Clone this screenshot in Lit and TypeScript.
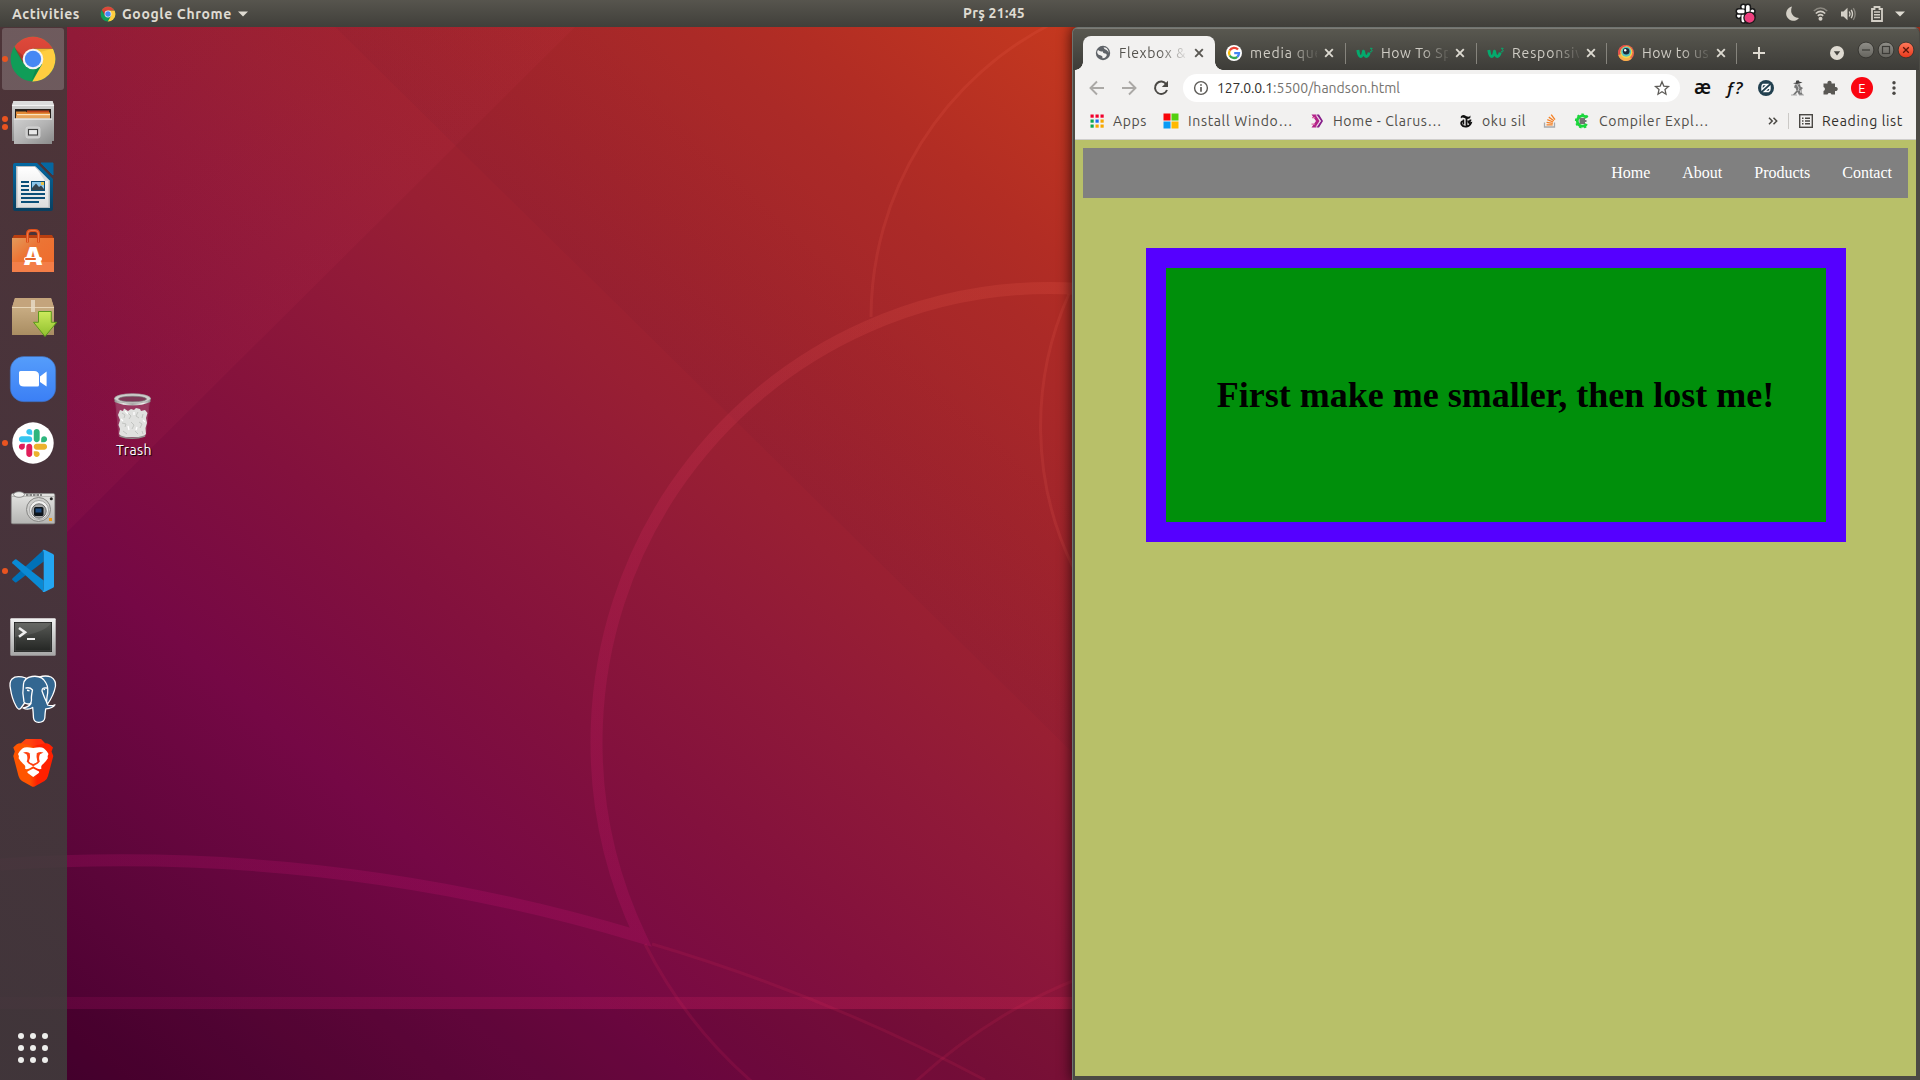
import { LitElement, html, svg, css } from "lit";
import { customElement, property } from "lit/decorators.js";

/* One line of text whose tracking is adjusted to span a given width. */
@customElement("fit-text")
class FitText extends LitElement {
  @property({ type: Number }) w = 0;
  @property() text = "";
  static styles = css`
    :host { display: block; white-space: pre; flex: none; }
    .run { display: inline-block; }
  `;
  firstUpdated() {
    const run = this.renderRoot.querySelector(".run") as HTMLElement;
    const natural = run.getBoundingClientRect().width;
    run.style.letterSpacing = (this.w - natural) / this.text.length + "px";
  }
  render() {
    return html`<span class="run">${this.text}</span>`;
  }
}

const chromeLogo = (id: string) => svg`
  <clipPath id=${"cc" + id}><circle cx="24" cy="24" r="22.4"/></clipPath>
  <linearGradient id=${"cr" + id} x1="0" y1="0" x2="0" y2="1"><stop offset="0" stop-color="#e04a3c"/><stop offset="1" stop-color="#cf3e32"/></linearGradient>
  <g clip-path=${"url(#cc" + id + ")"}>
    <rect width="48" height="48" fill="#109d58"/>
    <path d="M24 13.8H48V48H22.500L33 29.200Z" fill="#ffcd40"/>
    <path d="M4 9L0 0H48V13.800H24L15 28.500Z" fill=${"url(#cr" + id + ")"}/>
    <path d="M24 13.800H43.500L31 17Z" fill="#d9a520" opacity=".4"/>
    <path d="M5.500 13L14.500 28.500L15.500 22Z" fill="#8c2a1e" opacity=".5"/>
    <path d="M22.500 46L33 29L27 33Z" fill="#0a6b3a" opacity=".4"/>
  </g>
  <circle cx="24" cy="24" r="10.300" fill="#f4f4f4"/>
  <circle cx="24" cy="24" r="8.200" fill="#4688f4"/>`;

const slackShape = (c: string[]) => svg`
  <path fill=${c[0]} d="M25.800 77.600c0 7.100-5.800 12.900-12.900 12.900S0 84.700 0 77.600s5.800-12.900 12.900-12.900h12.900v12.900zm6.500 0c0-7.100 5.800-12.900 12.900-12.900s12.900 5.800 12.900 12.900v32.300c0 7.100-5.800 12.900-12.900 12.900s-12.900-5.800-12.900-12.900V77.600z"/>
  <path fill=${c[1]} d="M45.200 25.800c-7.100 0-12.900-5.800-12.900-12.900S38.100 0 45.200 0s12.900 5.800 12.900 12.900v12.900H45.200zm0 6.500c7.100 0 12.900 5.800 12.900 12.900s-5.800 12.900-12.900 12.900H12.900C5.800 58.100 0 52.300 0 45.200s5.800-12.900 12.900-12.900h32.300z"/>
  <path fill=${c[2]} d="M97 45.200c0-7.100 5.800-12.900 12.900-12.900s12.900 5.800 12.900 12.900-5.800 12.900-12.900 12.900H97V45.200zm-6.500 0c0 7.100-5.800 12.900-12.900 12.900s-12.900-5.800-12.900-12.900V12.900C64.700 5.800 70.500 0 77.600 0s12.900 5.800 12.900 12.900v32.300z"/>
  <path fill=${c[3]} d="M77.600 97c7.100 0 12.900 5.800 12.900 12.900s-5.800 12.900-12.900 12.900-12.900-5.800-12.900-12.900V97h12.900zm0-6.500c-7.100 0-12.900-5.800-12.900-12.900s5.800-12.900 12.900-12.900h32.300c7.100 0 12.900 5.800 12.900 12.900s-5.800 12.900-12.900 12.900H77.600z"/>`;

const filesIcon = svg`
  <linearGradient id="fa" x1="0" y1="0" x2="0" y2="1"><stop offset="0" stop-color="#d6d6d6"/><stop offset="1" stop-color="#8e8e8e"/></linearGradient>
  <linearGradient id="fb" x1="0" y1="0" x2="1" y2="1"><stop offset="0" stop-color="#cfcfcf"/><stop offset=".5" stop-color="#b4b4b4"/><stop offset="1" stop-color="#8b8b8b"/></linearGradient>
  <path d="M4.500 2H43.500L45 6.500V42H3V6.500Z" fill="url(#fa)"/>
  <path d="M4.500 2H43.500L45 6.500H3Z" fill="#dcdcdc"/><rect x="3" y="6" width="42" height="1" fill="#f2f2f2"/>
  <rect x="6" y="10" width="36" height="11" fill="#26201c"/>
  <path d="M18 11.500H40V14H18Z" fill="#c0461c"/>
  <path d="M7 12.500H17L18 13.500H41V20H7Z" fill="#e38a35"/>
  <rect x="8" y="15" width="33" height="1.400" fill="#fbe3bf"/><rect x="7" y="17" width="34" height="3" fill="#e7a55c"/>
  <rect x="5" y="19.500" width="38" height="25.500" rx=".6" fill="url(#fb)"/><rect x="5" y="19.500" width="38" height="1.200" fill="#ececec"/>
  <rect x="17" y="28" width="14" height="11" rx="2" fill="#c9c9c9" stroke="#dadada" stroke-width=".8"/>
  <rect x="19.500" y="30.500" width="9" height="5.500" fill="#e8e8e8" stroke="#3f3f3f" stroke-width="1.100"/>`;

const writerIcon = svg`
  <linearGradient id="wa" x1="0" y1="0" x2="0" y2="1"><stop offset="0" stop-color="#0369a3"/><stop offset="1" stop-color="#0a3f5f"/></linearGradient>
  <linearGradient id="wb" x1="0" y1="0" x2="0" y2="1"><stop offset="0" stop-color="#fff"/><stop offset="1" stop-color="#dedede"/></linearGradient>
  <path d="M6 0H28L44 16V46Q44 48 42 48H6Q4 48 4 46V2Q4 0 6 0Z" fill="url(#wa)"/>
  <path d="M32 0H44V12Z" fill="#0667a0" stroke="#0667a0" stroke-linejoin="round"/>
  <path d="M7 3H26L41 18V45H7Z" fill="#b9bdc0"/><path d="M8.500 4H26L39.500 18.500V44H8.500Z" fill="url(#wb)"/>
  <path d="M26 3L41 18H36Z" fill="#d6dbe0"/>
  <path d="M12 19H20M12 23H20M12 27H20M12 31H36M12 35H36M12 39H30" stroke="#0b4f78" stroke-width="2"/>
  <rect x="22.500" y="18.500" width="13" height="9" fill="#8cc6ea" stroke="#0b4f78"/><path d="M23 27V25L27 20.500L30 24L32 22.500L35 26V27Z" fill="#36444d"/><rect x="32" y="19" width="3" height="3" fill="#e5c14c"/>`;

const softwareIcon = svg`
  <linearGradient id="sa" x1="0" y1="0" x2="1" y2="1"><stop offset="0" stop-color="#e39a5b"/><stop offset=".4" stop-color="#ec7434"/><stop offset="1" stop-color="#f06a2c"/></linearGradient>
  <path d="M5 8H43L45 11.500H3Z" fill="#b93f10"/>
  <rect x="3" y="11" width="42" height="34" fill="url(#sa)"/><rect x="3" y="35" width="42" height="10" fill="#f58552" opacity=".7"/>
  <path d="M18.500 15.500V7Q18.500 3.500 22 3.500H26Q29.500 3.500 29.500 7V15.500" fill="none" stroke="#dd4f1a" stroke-width="3"/>
  <path d="M18.500 15V7Q18.500 3.500 22 3.500H26Q29.500 3.500 29.500 7V15" fill="none" stroke="#f08554" stroke-width=".8"/>
  <text x="24" y="38" text-anchor="middle" font-family="Open Sans, sans-serif" font-weight="800" font-size="25" fill="#fff">A</text>
  <rect x="15" y="30" width="18" height="4" rx="2" fill="#fff"/><rect x="16" y="31" width="11" height="2" rx="1" fill="#e8622a"/>`;

const packageIcon = svg`
  <linearGradient id="pa" x1="0" y1="0" x2="0" y2="1"><stop offset="0" stop-color="#d3b78e"/><stop offset="1" stop-color="#a98d62"/></linearGradient>
  <linearGradient id="pb" x1="0" y1="0" x2="0" y2="1"><stop offset="0" stop-color="#cdea5d"/><stop offset="1" stop-color="#8fbf2d"/></linearGradient>
  <path d="M6 7H42L45 16.500V44H3V16.500Z" fill="url(#pa)"/><path d="M6 7H42L45 16.500H3Z" fill="#c4a47c"/>
  <rect x="3" y="16" width="42" height="1" fill="#e7d5b6"/><rect x="22" y="9" width="4" height="12" fill="#e8dcc8" opacity=".8"/>
  <path d="M29.500 20.500H42.300V31.300H47.700L36 45.500L24.500 31.300H29.500Z" fill="url(#pb)" stroke="#5c9a1c"/>`;

const zoomIcon = svg`
  <linearGradient id="za" x1="0" y1="0" x2="0" y2="1"><stop offset="0" stop-color="#559dfb"/><stop offset="1" stop-color="#3b7ff5"/></linearGradient>
  <rect x="1.300" y="1.500" width="45.400" height="45.200" rx="13.500" fill="url(#za)" stroke="#3f6cb4" stroke-width=".6"/>
  <path d="M10 17.500Q10 16 11.500 16H25Q30 16 30 20.500V30Q30 31.500 28.500 31.500H15Q10 31.500 10 27ZM31 21.500L37.600 16.500V31.500L31 27Z" fill="#fff"/>`;

const slackIcon = svg`<circle cx="24" cy="24" r="20.700" fill="#fff"/><g transform="translate(9.900 9.900) scale(.2295)">${slackShape(["#e01e5a", "#36c5f0", "#2eb67d", "#ecb22e"])}</g>`;

const cameraIcon = svg`
  <linearGradient id="ca" x1="0" y1="0" x2="0" y2="1"><stop offset="0" stop-color="#e4e4e2"/><stop offset="1" stop-color="#b4b4b2"/></linearGradient>
  <rect x="2.300" y="10.500" width="43.500" height="30.300" rx="1.500" fill="url(#ca)" stroke="#8a8a88" stroke-width=".7"/>
  <path d="M3 13.500H45" stroke="#a2a2a0" stroke-width=".6"/><path d="M17 12H33" stroke="#666" stroke-width="1.600" stroke-dasharray="2.500 1"/>
  <ellipse cx="10" cy="11.500" rx="5.500" ry="2.800" fill="#ededeb" stroke="#777" stroke-width=".8"/>
  <circle cx="29.500" cy="26.500" r="12" fill="#cfcfcd" stroke="#868684"/><circle cx="30" cy="27" r="9.500" fill="#f1f1f0" stroke="#999" stroke-width=".8"/>
  <circle cx="30" cy="28" r="7.200" fill="#a6a6a6" stroke="#6f6f6f"/><rect x="25" y="24" width="9.500" height="9" rx="1.500" fill="#0d1319"/><rect x="26.500" y="25.500" width="6" height="4" fill="#1f4b80"/>
  <circle cx="42.300" cy="15.800" r="1.500" fill="#222"/><rect x="40" y="35" width="3" height="3" fill="#f09a1a"/>`;

const codeIcon = svg`
  <path d="M34.700 2.700L3.400 31.500Q2.700 32.300 3.400 33L6 35.200Q6.800 35.700 7.500 35.200L34.700 14.500Z" fill="#0071b8"/>
  <path d="M34.700 45L3.400 16.300Q2.700 15.500 3.400 14.800L6 12.600Q6.800 12.100 7.500 12.600L34.700 33.500Z" fill="#0a8ad4"/>
  <path d="M33.500 3Q34.700 2.400 36 3L44 7Q45 7.500 45 8.600V39.200Q45 40.300 44 40.800L36 44.700Q34.700 45.400 33.500 44.800Q34.700 44 34.700 42V6Q34.700 4 33.500 3Z" fill="#24a6f2"/>`;

const terminalIcon = svg`
  <linearGradient id="ta" x1="0" y1="0" x2="0" y2="1"><stop offset="0" stop-color="#f2f2f2"/><stop offset="1" stop-color="#a6a6a6"/></linearGradient>
  <linearGradient id="tb" x1="0" y1="0" x2="0" y2="1"><stop offset="0" stop-color="#575955"/><stop offset="1" stop-color="#242624"/></linearGradient>
  <rect x="1.300" y="7.200" width="45.400" height="37.500" rx="1" fill="url(#ta)"/><rect x="5" y="11" width="38" height="30" fill="#1c1e1c"/>
  <rect x="6" y="12" width="36" height="28" fill="url(#tb)" stroke="#555" stroke-width=".7"/><path d="M6 12H42Q36 22 6 26Z" fill="#fff" opacity=".09"/>
  <path d="M10 17L16 21.300L10 25.700" fill="none" stroke="#eee" stroke-width="2.600"/><rect x="18" y="27" width="8" height="2" fill="#eee"/>`;

const elephantIcon = svg`
  <g fill="#336791" stroke="#fff" stroke-width="1.300" stroke-linejoin="round" stroke-linecap="round">
    <path d="M30 2Q37 0 42 2Q47 5 46.500 11Q45 20 38 30L33 20Z"/>
    <path d="M17 3Q7 0 3 4Q0 7 1.500 14Q3 24 7 31Q9.500 36 12 33L17 26Z"/>
    <path d="M15 27Q13 18 14.500 9Q15.500 2.500 23 1.500Q33 0 37 8Q40 13 38 22Q37 27 38.500 30Q42 31.500 46 29.800Q44 33.500 36.700 33.800Q36 38 35.800 43Q35 47.500 29.500 47.300Q25 47 24.500 43Q24.200 37 23.700 32.500Q19 35.500 14 33Q19 32.500 22 28.500Q17 30 15 27Z"/>
    <path d="M17 13Q21 12 23.500 15Q22 22 22.500 25Q22.500 28 20.500 29.500" fill="none"/>
    <path d="M37.500 13Q33 12 33 16Q35 22 38 28" fill="none"/>
  </g>
  <path d="M18 15.200L20.500 15.700M34.500 14.500L36 14.200" stroke="#fff" stroke-width="1.400"/>`;

const braveIcon = svg`
  <linearGradient id="ba" x1="0" x2="1"><stop offset=".4" stop-color="#ff5500"/><stop offset=".6" stop-color="#ff2000"/></linearGradient>
  <path d="M17 0H32L36 4.300Q39.500 3.500 44 8.500L42.500 12.500L44.300 17L39 37Q38 40.500 35.500 42L26 47.300Q24.200 48.300 22.500 47.300L13 42Q10.500 40.500 9.500 37L4.300 17L5.800 12.500L4.300 8.500Q8.500 3.500 12 4.300Z" fill="url(#ba)"/>
  <path d="M17 0H32L36 4.300L24 7L12 4.300Z" fill="#ff3a1a" opacity=".6"/>
  <path d="M24.200 9Q19 8 15.500 8.500Q12 9.500 9 15Q10.500 17.500 9.500 19Q11 22 15.500 26Q16.800 27.500 16 29.500Q17.500 31.800 24.200 27.300Q31 31.800 32.500 29.500Q31.700 27.500 33 26Q37.500 22 39 19Q38 17.500 39.500 15Q36.500 9.500 33 8.500Q29.500 8 24.200 9Z" fill="#fff"/>
  <path d="M14 13.500Q19 12 21.200 14.800Q22 18 20 22.500Q21 24 24.200 25Q27.500 24 28.500 22.500Q26.500 18 27.300 14.800Q29.500 12 34.500 13.500L31 15.200Q29.300 18.500 30.800 22.500L29 24.500L24.200 27.300L19.500 24.500L17.700 22.500Q19.200 18.500 17.500 15.200Z" fill="#ff4010"/>
  <path d="M20.800 14.500H27.700Q27 18 28 22L24.200 23.700L20.500 22Q21.500 18 20.800 14.500Z" fill="#fff"/>
  <path d="M24.200 29.500L30 32.500Q30.500 33.500 29.500 34.200L24.200 38L19 34.200Q18 33.500 18.500 32.500Z" fill="#fff"/>`;

const trashIcon = svg`
  <linearGradient id="tr" x1="0" x2="1"><stop offset="0" stop-color="#8d8d8b"/><stop offset=".25" stop-color="#e6e6e4"/><stop offset=".5" stop-color="#a9a9a7"/><stop offset=".8" stop-color="#efefed"/><stop offset="1" stop-color="#888"/></linearGradient>
  <path d="M1.500 7L5 43Q18 47 31.500 43L35.500 7Z" fill="#fff" opacity=".16" stroke="#ddd" stroke-width="1"/>
  <path d="M4 22L6 17L9 18L10 15.500L14 18L17 16L20 17L22 15L26 16L27 18L31 17L33.500 20L32 25L33 30L31.500 35L32 41L29 44H8L5 41L6 36L4.500 32L6 27Z" fill="#e0e1df"/>
  <path d="M8 20L11 22L10 25M14 20L17 23L15 26M24 19L22 23L25 25M29 21L28 25M8 30L12 31L11 34M17 29L20 32L18 36M25 29L28 31L26 35M9 38L13 41M21 38L24 41M28 38L29 41" fill="none" stroke="#c2c4c1" stroke-width="1"/>
  <path d="M11 18L14 21M20 19L20 22M7 26L9 28M14 33L15 37M23 34L22 37M29 27L31 29" fill="none" stroke="#fff" stroke-width="1.300"/>
  <path d="M5.500 43Q18 47.500 31 43" fill="none" stroke="#8f8f8d" stroke-width="1.500"/>
  <path d="M.5 5V9Q9 12.500 18.500 12.500T36.500 9V5Z" fill="url(#tr)"/>
  <ellipse cx="18.500" cy="5.500" rx="18" ry="4.800" fill="#cfcfcd" stroke="#a5a5a3" stroke-width=".7"/><ellipse cx="18.500" cy="6" rx="14" ry="2.800" fill="#7d3a58" stroke="#777" stroke-width=".7"/>`;

const dock = [
  { icon: chromeLogo("dock"), dots: 1, active: true },
  { icon: filesIcon, dots: 2 },
  { icon: writerIcon, dots: 0 },
  { icon: softwareIcon, dots: 0 },
  { icon: packageIcon, dots: 0 },
  { icon: zoomIcon, dots: 0 },
  { icon: slackIcon, dots: 1 },
  { icon: cameraIcon, dots: 0 },
  { icon: codeIcon, dots: 1 },
  { icon: terminalIcon, dots: 0 },
  { icon: elephantIcon, dots: 0 },
  { icon: braveIcon, dots: 0 },
];

const globe = svg`<circle cx="8" cy="8" r="7.200" fill="#5f6368"/><path d="M3 5Q5 7 7.500 6.300Q8 8.500 10 8.500Q12.500 9 11.500 11Q10 13.500 7.500 13.200Q8 11 6 10.500Q3 10 2.200 8Q2 6 3 5ZM8.500 2.200Q9 4.500 11.500 5Q13 6 13.800 8Q13.500 4.500 11.500 3Q10 2.200 8.500 2.200Z" fill="#f2f1f0"/>`;
const google = svg`<circle cx="8" cy="8" r="8" fill="#fff"/><g fill="none" stroke-width="2.300"><path d="M12 4.600A5 5 0 0 0 3.700 5.500" stroke="#ea4335"/><path d="M3.700 5.500A5 5 0 0 0 3.700 10.500" stroke="#fbbc05"/><path d="M3.700 10.500A5 5 0 0 0 11.300 11.800" stroke="#34a853"/><path d="M11.300 11.800A5 5 0 0 0 13 8.200H8.200" stroke="#4285f4"/></g>`;
const w3 = svg`<path d="M.8 5Q1.800 11.500 3.800 11.500Q5.500 11.500 6.500 6.200Q7.500 11.500 9.300 11.500Q11.200 11.500 12.200 7.500" fill="none" stroke="#04aa6d" stroke-width="3" stroke-linejoin="round"/><path d="M13 3.300H15.200L14.100 4.800Q15.500 5 15.200 6.200Q14.600 7.200 13 6.700" fill="none" stroke="#04aa6d" stroke-width="1"/>`;
const eye = svg`<circle cx="8" cy="8" r="8" fill="#ef6b4a"/><path d="M8 0A8 8 0 0 0 .3 10L8 8Z" fill="#e34c4c"/><path d="M.3 10A8 8 0 0 0 13.500 13.800L8 8Z" fill="#f7b04c"/><circle cx="8.300" cy="7.300" r="6" fill="#f5d547"/><circle cx="8.200" cy="6.800" r="5" fill="#58c3c0"/><circle cx="8.200" cy="6.300" r="3.300" fill="#1b2a3a"/><circle cx="7.200" cy="5.300" r="1.200" fill="#fff"/>`;

const tabs = [
  { icon: globe, title: "Flexbox &", w: 67, active: true },
  { icon: google, title: "media que", w: 73 },
  { icon: w3, title: "How To Sp", w: 71 },
  { icon: w3, title: "Responsiv", w: 71 },
  { icon: eye, title: "How to us", w: 67 },
];

const bookmarks = [
  { cls: "b-apps", w: 34, label: "Apps", icon: svg`${[0, 1, 2].map((r) => [0, 1, 2].map((c) => svg`<rect x=${1.5 + c * 5} y=${1.5 + r * 5} width="3.200" height="3.200" fill=${[["#f2002c", "#f2002c", "#f2002c"], ["#0ca650", "#1a6ef0", "#f7a800"], ["#0ca650", "#f7a800", "#f7a800"]][r][c]}/>`))}` },
  { cls: "b-win", w: 105, label: "Install Windo…", icon: svg`<path d="M.5 .5h7v7h-7z" fill="#f80508"/><path d="M8.500 .5h7v7h-7z" fill="#52d010"/><path d="M.5 8.500h7v7h-7z" fill="#0a9bf5"/><path d="M8.500 8.500h7v7h-7z" fill="#ffb900"/>` },
  { cls: "b-clarus", w: 109, label: "Home - Clarus…", icon: svg`<path d="M2.500 1.500L7 8L2.500 14.500H7L11 8L7 1.500Z" fill="#b3248a"/><path d="M7.500 1.500L12 8L7.500 14.500H10L14 8L10 1.500Z" fill="#87208b"/><path d="M7.300 2.500L11 8L7.300 13.500" fill="none" stroke="#f2f1f0" stroke-width=".8"/><path d="M3 4h3v1.200h-3zM2.500 10.500h3.500v1.200h-3.500z" fill="#e06aa8"/>` },
  { cls: "b-nyt", w: 44, label: "oku sil", icon: svg`<path d="M3 5.500Q2 3 4.500 2.200Q6 1.800 8.500 3.300Q11 4.500 12.500 2.500Q13 5 10.800 5.800Q8.500 6.300 6.500 5Q4 3.800 3 5.500Z" fill="#111"/><path d="M8.500 5V12.500M5 8Q2.500 9 3.500 11.500Q5 14 8.500 13.500Q12 13 13 10Q10.500 10.500 10.500 8.500Q12.500 8.500 12.500 6.500" fill="none" stroke="#111" stroke-width="1.800"/><path d="M5.500 6.500V11.500" stroke="#111" stroke-width="1.500"/>` },
  { cls: "b-so", w: 0, label: "", icon: svg`<path d="M2.500 9.500V14H12.500V9.500" fill="none" stroke="#a7a9ac" stroke-width="1.300"/><path d="M4.500 11.800H10.700M4.600 9.300L10.800 10.400M5.300 6.700L11.200 9M6.800 4.100L11.900 7.700M9.200 1.700L13 6.700" stroke="#f48024" stroke-width="1.300"/>` },
  { cls: "b-ce", w: 110, label: "Compiler Expl…", icon: svg`<path d="M12.700 5A5.200 5.200 0 1 0 12.700 11" fill="none" stroke="#1bd63c" stroke-width="2.800"/><path d="M13.500 4.300A6.300 6.300 0 1 0 13.500 11.700" fill="none" stroke="#1bd63c" stroke-width="2.400" stroke-dasharray="2.200 2.200"/><path d="M5.500 6H11M5.500 8H12.500M5.500 10H11" stroke="#4a4a4a" stroke-width="1.500"/>` },
];

@customElement("app-root")
class AppRoot extends LitElement {
  static styles = css`
    :host { display: block; position: relative; width: 1920px; height: 1080px; overflow: hidden; font-family: Ubuntu, "Noto Sans", sans-serif; font-size: 14px; line-height: 20px; }
    * { box-sizing: border-box; }
    svg { display: block; flex: none; overflow: visible; }
    .wall { position: absolute; left: 0; top: 0; }
    .screen { position: relative; display: grid; grid-template-rows: 27px 1fr; height: 1080px; }
    .topbar { display: grid; grid-template-columns: 1fr auto 1fr; align-items: center; background: linear-gradient(#57554e, #403f3a); color: #dfdbd2; font-weight: 700; height: 27px; }
    .top-left { display: flex; align-items: center; padding-left: 12px; height: 27px; }
    .app-name { display: flex; align-items: center; margin-left: 20px; gap: 6px; }
    .clock { padding-left: 68px; padding-bottom: 1px; }
    .top-right { display: flex; align-items: center; justify-content: flex-end; padding-right: 15px; }
    .moon { margin-left: 30px; } .wifi { margin-left: 13px; } .vol { margin-left: 13px; } .bat { margin-left: 14px; } .caret2 { margin-left: 12px; }
    .main { display: flex; min-height: 0; }
    .dock { width: 67px; display: flex; flex-direction: column; background: linear-gradient(rgba(64, 58, 56, .83), rgba(64, 62, 60, .86)); }
    .dock-item { position: relative; display: flex; align-items: center; justify-content: center; width: 62px; height: 62px; margin: 1px 0 1px 2px; border-radius: 3px; }
    .dock-item.active { background: rgba(255, 255, 255, .19); }
    .dots { position: absolute; left: 0; top: 0; height: 62px; display: flex; flex-direction: column; gap: 2.500px; justify-content: center; }
    .dot { width: 6px; height: 6px; border-radius: 50%; background: #e95420; }
    .grid-btn { margin: auto 0 17px 18px; }
    .desktop { flex: 1; display: flex; padding: 366px 0 0 47px; }
    .trash { display: flex; flex-direction: column; align-items: center; width: 40px; height: 80px; color: #fff; text-shadow: 1px 1px 1px #000; }
    .trash svg { margin-right: 3px; }
    .trash fit-text { margin-top: 1px; }
    .win { width: 848px; display: flex; flex-direction: column; background: #4b4a44; padding: 1px 4px 4px 3px; border-radius: 6px 6px 0 0; box-shadow: 0 0 13px 1px rgba(0, 0, 0, .65), inset 1px 1px 0 #6f7470; clip-path: inset(0 0 0 -30px); }
    .tabbar { display: flex; height: 42px; margin: 0 -3px 0 -2px; padding-left: 10px; background: linear-gradient(#7c7b75 0 1px, #595850 1px, #3d3c38); border-radius: 5px 5px 0 0; color: #cfccc4; }
    .tab { position: relative; display: flex; align-items: center; width: 131px; height: 34px; margin-top: 8px; padding-left: 11px; flex: none; }
    .tab:nth-child(4), .tab:nth-child(5) { width: 130px; }
    .tab:nth-child(3), .tab:nth-child(4) { padding-left: 11px; }
    .tab.active { width: 132px; padding-left: 12px; background: #f2f1f0; border-radius: 8px 8px 0 0; color: #55534e; }
    .tab.active::before, .tab.active::after { content: ""; position: absolute; bottom: 0; width: 8px; height: 8px; }
    .tab.active::before { left: -8px; background: radial-gradient(circle at 0 0, transparent 7.500px, #f2f1f0 8px); }
    .tab.active::after { right: -8px; background: radial-gradient(circle at 100% 0, transparent 7.500px, #f2f1f0 8px); }
    .title { width: 67px; margin-left: 8px; -webkit-mask-image: linear-gradient(90deg, #000 58%, transparent 106%); mask-image: linear-gradient(90deg, #000 58%, transparent 106%); }
    .close { margin-left: 7px; }
    .active .close { margin-left: 8px; }
    .tab.sep::after { content: ""; position: absolute; right: 0; top: 7px; width: 1px; height: 21px; background: #86847d; }
    .plus { margin: 19px 0 0 16px; }
    .drop { margin: 18px 0 0 65px; }
    .wbtns { display: flex; gap: 4px; margin: 14px 0 0 14px; }
    .toolbar { display: flex; align-items: center; height: 36px; background: #f2f1f0; padding-left: 14px; flex: none; }
    .nav-i + .nav-i { margin-left: 16px; }
    .omni { display: flex; align-items: center; width: 497px; height: 28px; border-radius: 14px; background: #fff; margin-left: 14px; padding: 0 10px; color: #75736f; }
    .host { color: #33312e; margin-left: 8px; }
    .star { margin-left: auto; }
    .exts { display: flex; align-items: center; margin-left: 10px; gap: 8px; }
    .ext { width: 24px; height: 24px; display: flex; align-items: center; justify-content: center; color: #111; }
    .ae { font: 600 19px/20px "Noto Sans", sans-serif; letter-spacing: -1px; padding-bottom: 3px; }
    .fq { font: italic 600 17px/20px "Open Sans", sans-serif; }
    .avatar { border-radius: 50%; background: #fa0510; color: #fff; width: 22px; height: 22px; margin: 0 1px; font-size: 13px; }
    .marks { display: flex; align-items: center; height: 34px; border-bottom: 1px solid #cfcecc; background: #f2f1f0; color: #4f4d49; padding-bottom: 4px; position: relative; flex: none; }
    .mark { display: flex; align-items: center; height: 20px; }
    .b-apps { margin-left: 14px; gap: 8px; } .b-win { margin-left: 16px; gap: 9px; } .b-clarus { margin-left: 16px; gap: 8px; }
    .b-nyt { margin-left: 16px; gap: 8px; } .b-so { margin-left: 16px; } .b-ce { margin-left: 16px; gap: 9px; }
    .more { margin-left: 59px; } .vsep { width: 1px; height: 16px; background: #cbc9c6; margin: 0 9px 0 10px; }
    .reading { display: flex; align-items: center; gap: 8px; color: #32302c; }
    .page { flex: 1; background: #b8c069; padding: 8px; font-family: "Liberation Serif", serif; min-height: 0; }
    .sitenav { height: 50px; background: #808080; display: flex; justify-content: flex-end; align-items: center; color: #fff; font-size: 16px; }
    .sitenav a { padding: 0 16px; }
    .card { width: 700px; height: 294px; margin: 50px auto 0; border: 20px solid #50f; background: #008f0b; display: flex; align-items: center; justify-content: center; }
    .card h1 { margin: 0; font-size: 36px; line-height: 42px; color: #000; }
  `;

  private wallpaper() {
    return html`<svg class="wall" width="1920" height="1080" viewBox="0 0 1920 1080">
      <defs>
        <linearGradient id="bg" gradientUnits="userSpaceOnUse" x1="67" y1="1079" x2="1009" y2="-16">
          <stop offset="0" stop-color="#490030"/><stop offset=".12" stop-color="#5b0539"/><stop offset=".28" stop-color="#750845"/>
          <stop offset=".42" stop-color="#83113d"/><stop offset=".55" stop-color="#911a38"/><stop offset=".62" stop-color="#981f33"/>
          <stop offset=".72" stop-color="#a1242c"/><stop offset=".83" stop-color="#ab2a27"/><stop offset=".88" stop-color="#b22d24"/><stop offset="1" stop-color="#c4381f"/>
        </linearGradient>
        <linearGradient id="tri" gradientUnits="userSpaceOnUse" x1="67" y1="27" x2="320" y2="280"><stop offset="0" stop-color="#f04060" stop-opacity="0"/><stop offset="1" stop-color="#f04060" stop-opacity=".06"/></linearGradient>
        <linearGradient id="dark" gradientUnits="userSpaceOnUse" x1="700" y1="390" x2="860" y2="230"><stop offset="0" stop-color="#50102c" stop-opacity=".06"/><stop offset="1" stop-color="#50102c" stop-opacity="0"/></linearGradient>
        <linearGradient id="line" x1="0" x2="1"><stop offset="0" stop-color="#ff2090" stop-opacity=".09"/><stop offset="1" stop-color="#ff3060" stop-opacity=".17"/></linearGradient>
        <linearGradient id="ring" gradientUnits="userSpaceOnUse" x1="900" y1="282" x2="600" y2="950"><stop offset="0" stop-color="#ff6858"/><stop offset=".5" stop-color="#f82c70"/><stop offset="1" stop-color="#f01888"/></linearGradient>
      </defs>
      <rect width="1920" height="1080" fill="url(#bg)"/>
      <path d="M67 27H575L67 532Z" fill="url(#tri)"/>
      <path d="M335 27L1080 760V27Z" fill="url(#dark)"/>
      <rect y="1009" width="1100" height="71" fill="#200018" opacity=".14"/>
      <rect y="997" width="1080" height="12" fill="url(#line)"/>
      <g fill="none">
        <path d="M0 864.500A1803 1803 0 0 1 640.500 937A454 454 0 0 1 1080 289" stroke="url(#ring)" stroke-opacity=".15" stroke-width="12" stroke-miterlimit="10"/>
        <g stroke="#e83060" stroke-opacity=".13" stroke-width="3">
          <path d="M645 944A454 454 0 0 0 758 1087"/><path d="M652 944A1803 1803 0 0 1 985 1080"/>
          <path d="M1075 980Q988 1015 914 1083"/>
        </g>
        <g stroke="#ff7060" stroke-opacity=".13" stroke-width="3">
          <path d="M1055 22A330 330 0 0 0 871 317"/><path d="M1069 294A322 322 0 0 0 1073 567"/>
        </g>
      </g>
    </svg>`;
  }

  private top() {
    const white = ["#fff", "#fff", "#fff", "#fff"];
    return html`<div class="topbar">
      <div class="top-left">
        <fit-text .w=${68} .text=${"Activities"}></fit-text>
        <div class="app-name">
          <svg width="16" height="16" viewBox="0 0 48 48">${chromeLogo("top")}</svg>
          <fit-text .w=${110} .text=${"Google Chrome"}></fit-text>
          <svg width="10" height="6"><path d="M0 .5H10L5 5.500Z" fill="#dfdbd2"/></svg>
        </div>
      </div>
      <div class="clock"><fit-text .w=${62} .text=${"Prş 21:45"}></fit-text></div>
      <div class="top-right">
        <svg width="20" height="20" viewBox="0 0 20 20"><g transform="translate(1 1) scale(.14)"><g stroke="#1a1a1a" stroke-width="22" paint-order="stroke">${slackShape(white)}</g></g><circle cx="13.500" cy="13.700" r="5.600" fill="#ee3f7e" stroke="#1a1a1a" stroke-width="1.300"/></svg>
        <svg class="moon" width="14" height="15" viewBox="0 0 14 15"><path d="M6 .5A7.200 7.200 0 1 0 13 12Q6.500 11.500 5.200 6Q4.800 3 6 .5Z" fill="#d3cfc6"/></svg>
        <svg class="wifi" width="15" height="14" viewBox="0 0 15 14"><g fill="none" stroke="#d3cfc6" stroke-width="1.600"><path d="M.8 4Q7.500-2 14.200 4" opacity=".45"/><path d="M2.800 6.500Q7.500 2.300 12.200 6.500"/><path d="M4.800 8.800Q7.500 6.600 10.200 8.800"/></g><circle cx="7.500" cy="11.700" r="2" fill="#d3cfc6"/></svg>
        <svg class="vol" width="16" height="14" viewBox="0 0 16 14"><path d="M0 4.500H2.500L6.500 .8V13.200L2.500 9.500H0Z" fill="#d3cfc6"/><g fill="none" stroke="#d3cfc6" stroke-width="1.400"><path d="M8.300 4.500Q9.800 7 8.300 9.500"/><path d="M10.200 2.800Q12.700 7 10.200 11.200"/><path d="M12.300 1.200Q16 7 12.300 12.800" opacity=".45"/></g></svg>
        <svg class="bat" width="12" height="16" viewBox="0 0 12 16"><path d="M1 3H3.500V1H8.500V3H11V15H1Z" fill="none" stroke="#d3cfc6" stroke-width="1.800"/><path d="M3 6H9M3 8.700H9M3 11.400H9" stroke="#d3cfc6" stroke-width="1.500"/></svg>
        <svg class="caret2" width="10" height="6"><path d="M0 .5H10L5 5.500Z" fill="#dfdbd2"/></svg>
      </div>
    </div>`;
  }

  private window() {
    const x = (c: string) => html`<svg class="close" width="10" height="10" viewBox="0 0 10 10"><path d="M1.200 1.200L8.800 8.800M8.800 1.200L1.200 8.800" stroke=${c} stroke-width="1.900"/></svg>`;
    return html`<div class="win">
      <div class="tabbar">
        ${tabs.map((t) => html`<div class="tab ${t.active ? "active" : "sep"}">
          <svg width="16" height="16" viewBox="0 0 16 16">${t.icon}</svg>
          <div class="title"><fit-text .w=${t.w} .text=${t.title}></fit-text></div>${x(t.active ? "#5a5853" : "#dcd9d0")}
        </div>`)}
        <svg class="plus" width="12" height="12" viewBox="0 0 12 12"><path d="M6 0V12M0 6H12" stroke="#dfdbd2" stroke-width="2"/></svg>
        <svg class="drop" width="14" height="14" viewBox="0 0 14 14"><circle cx="7" cy="7" r="7" fill="#dfdbd2"/><path d="M3.800 5.200H10.200L7 9.500Z" fill="#45443f"/></svg>
        <div class="wbtns">
          ${[0, 1, 2].map((i) => html`<svg width="16" height="16" viewBox="0 0 16 16">
            <linearGradient id="wb${i}" x1="0" y1="0" x2="0" y2="1"><stop offset="0" stop-color=${i === 2 ? "#ff7a5c" : "#908f89"}/><stop offset="1" stop-color=${i === 2 ? "#e8371a" : "#64635d"}/></linearGradient>
            <circle cx="8" cy="8" r="7.900" fill="url(#wb${i})" stroke="#33322e" stroke-width=".9"/>
            ${i === 0 ? svg`<path d="M4 8H12" stroke="#3c3b37" stroke-width="1.200"/>` : i === 1 ? svg`<rect x="4.500" y="4.500" width="7" height="7" fill="none" stroke="#3c3b37" stroke-width="1.200"/>` : svg`<path d="M5.200 5.200L10.800 10.800M10.800 5.200L5.200 10.800" stroke="#5b150a" stroke-width="1.300"/>`}
          </svg>`)}
        </div>
      </div>
      <div class="toolbar">
        <svg class="nav-i" width="16" height="16" viewBox="0 0 16 16"><path d="M15 8H2M8 1.500L1.500 8L8 14.500" fill="none" stroke="#aba9a6" stroke-width="1.900"/></svg>
        <svg class="nav-i" width="16" height="16" viewBox="0 0 16 16"><path d="M1 8H14M8 1.500L14.500 8L8 14.500" fill="none" stroke="#aba9a6" stroke-width="1.900"/></svg>
        <svg class="nav-i" width="16" height="16" viewBox="0 0 16 16"><path d="M13.300 4.200A6.200 6.200 0 1 0 14 10" fill="none" stroke="#4a4844" stroke-width="2"/><path d="M15 .8V7H8.800Z" fill="#4a4844"/></svg>
        <div class="omni">
          <svg width="16" height="16" viewBox="0 0 16 16"><circle cx="8" cy="8" r="6.400" fill="none" stroke="#5d5b57" stroke-width="1.400"/><path d="M8 7V11.700M8 4.200V5.800" stroke="#5d5b57" stroke-width="1.700"/></svg>
          <fit-text class="host" .w=${56} .text=${"127.0.0.1"}></fit-text><fit-text .w=${127} .text=${":5500/handson.html"}></fit-text>
          <svg class="star" width="16" height="16" viewBox="0 0 16 16"><path d="M8 1.800L9.800 6.100L14.500 6.500L11 9.600L12 14.200L8 11.800L4 14.200L5 9.600L1.500 6.500L6.200 6.100Z" fill="none" stroke="#5d5b57" stroke-width="1.300"/></svg>
        </div>
        <div class="exts">
          <div class="ext ae">æ</div>
          <div class="ext fq">ƒ?</div>
          <div class="ext"><svg width="16" height="16" viewBox="0 0 16 16"><circle cx="8" cy="8" r="8" fill="#22404f"/><path d="M4 9.500L9.500 4.500H5Q4 5 4 7ZM6.500 11.500H10.500Q12 11 12 9V6.500Z" fill="none" stroke="#fff" stroke-width="1.400"/></svg></div>
          <div class="ext"><svg width="16" height="16" viewBox="0 0 16 16"><path d="M3 3.200Q8 5 12.500 2.200L9.500 1.800L8.500 .3L6 .8L6 2.500Z" fill="#444"/><path d="M5 4.500L10 4.200L10.500 6.500L13 8L11.500 9.500L11.500 12L13 15H9L7.500 12L5 15H2.500L6.500 10.500L5.500 8L4 7.500L4.500 6Z" fill="#777"/><path d="M7 5L9 8L8 11M10 10L11 13" stroke="#ddd" stroke-width=".8" fill="none"/><path d="M1 15H7M9 15H14" stroke="#aaa"/></svg></div>
          <div class="ext"><svg width="16" height="16" viewBox="0 0 16 16"><path d="M2 3.500H5.500A2.100 2.100 0 1 1 9.500 3.500H13V7A2.100 2.100 0 1 1 13 11V14.500H9.500A2.100 2.100 0 0 0 5.500 14.500H1.500V11A2.100 2.100 0 0 0 1.500 7V3.500Z" fill="#5a5854"/></svg></div>
          <div class="ext avatar">E</div>
          <div class="ext"><svg width="4" height="14" viewBox="0 0 4 14"><circle cx="2" cy="1.800" r="1.700" fill="#4a4844"/><circle cx="2" cy="7" r="1.700" fill="#4a4844"/><circle cx="2" cy="12.200" r="1.700" fill="#4a4844"/></svg></div>
        </div>
      </div>
      <div class="marks">
        ${bookmarks.map((b) => html`<div class="mark ${b.cls}"><svg width="16" height="16" viewBox="0 0 16 16">${b.icon}</svg>${b.label ? html`<fit-text .w=${b.w} .text=${b.label}></fit-text>` : ""}</div>`)}
        <svg class="more" width="10" height="8" viewBox="0 0 10 8"><path d="M1 .8L4.200 4L1 7.200M5.500 .8L8.700 4L5.500 7.200" fill="none" stroke="#4a4844" stroke-width="1.500"/></svg>
        <div class="vsep"></div>
        <div class="reading">
          <svg width="16" height="16" viewBox="0 0 16 16"><rect x="1.700" y="1.700" width="12.600" height="12.600" fill="none" stroke="#4a4844" stroke-width="1.400"/><path d="M4 5.200H5.500M4 8H5.500M4 10.800H5.500M7 5.200H12M7 8H12M7 10.800H12" stroke="#4a4844" stroke-width="1.400"/></svg>
          <fit-text .w=${81} .text=${"Reading list"}></fit-text>
        </div>
      </div>
      <div class="page">
        <nav class="sitenav"><a>Home</a><a>About</a><a>Products</a><a>Contact</a></nav>
        <div class="card"><h1>First make me smaller, then lost me!</h1></div>
      </div>
    </div>`;
  }

  render() {
    return html`${this.wallpaper()}
      <div class="screen">
        ${this.top()}
        <div class="main">
          <div class="dock">
            ${dock.map((d) => html`<div class="dock-item ${d.active ? "active" : ""}">
              <div class="dots">${Array.from({ length: d.dots }, () => html`<div class="dot"></div>`)}</div>
              <svg width="48" height="48" viewBox="0 0 48 48">${d.icon}</svg>
            </div>`)}
            <svg class="grid-btn" width="30" height="30" viewBox="0 0 30 30">${[3, 15, 27].map((y) => [3, 15, 27].map((cx) => svg`<circle cx=${cx} cy=${y} r="3" fill="#eeeeec"/>`))}</svg>
          </div>
          <div class="desktop">
            <div class="trash"><svg width="37" height="46" viewBox="0 0 37 46">${trashIcon}</svg><fit-text .w=${36} .text=${"Trash"}></fit-text></div>
          </div>
          ${this.window()}
        </div>
      </div>`;
  }
}
